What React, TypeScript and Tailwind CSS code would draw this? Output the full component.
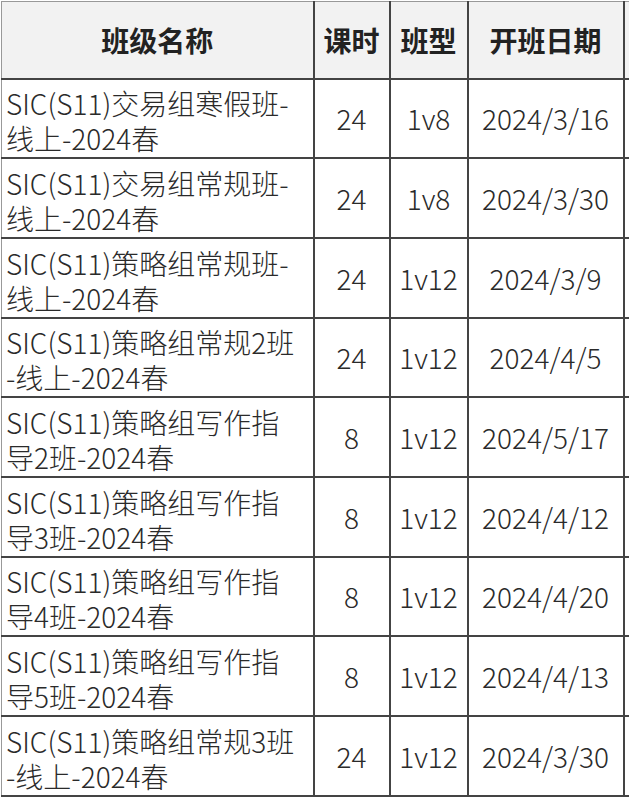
import React from 'react';

interface Course {
    name: string[];
    hours: number;
    type: string;
    date: string;
}

const courses: Course[] = [
    { name: ['SIC(S11)交易组寒假班-', '线上-2024春'], hours: 24, type: '1v8', date: '2024/3/16' },
    { name: ['SIC(S11)交易组常规班-', '线上-2024春'], hours: 24, type: '1v8', date: '2024/3/30' },
    { name: ['SIC(S11)策略组常规班-', '线上-2024春'], hours: 24, type: '1v12', date: '2024/3/9' },
    { name: ['SIC(S11)策略组常规2班', '-线上-2024春'], hours: 24, type: '1v12', date: '2024/4/5' },
    { name: ['SIC(S11)策略组写作指', '导2班-2024春'], hours: 8, type: '1v12', date: '2024/5/17' },
    { name: ['SIC(S11)策略组写作指', '导3班-2024春'], hours: 8, type: '1v12', date: '2024/4/12' },
    { name: ['SIC(S11)策略组写作指', '导4班-2024春'], hours: 8, type: '1v12', date: '2024/4/20' },
    { name: ['SIC(S11)策略组写作指', '导5班-2024春'], hours: 8, type: '1v12', date: '2024/4/13' },
    { name: ['SIC(S11)策略组常规3班', '-线上-2024春'], hours: 24, type: '1v12', date: '2024/3/30' },
];

export default function App() {
    return (
        <div
            className="w-[629px] h-[797px] overflow-hidden bg-white text-[#2a2a2a]"
            style={{ fontFamily: '"Noto Sans CJK SC", "Noto Sans", sans-serif' }}
        >
            <table className="table-fixed border-collapse w-[720px] ml-px mt-px text-[28px] font-light">
                <colgroup>
                    <col className="w-[312px]" />
                    <col className="w-[76px]" />
                    <col className="w-[78px]" />
                    <col className="w-[156px]" />
                    <col />
                </colgroup>
                <thead>
                    <tr className="h-[77px] bg-[#f2f2f2] font-bold text-[#222]">
                        <th className="border-2 border-[#444] border-l-[#999] border-t-[#999] border-l border-t">班级名称</th>
                        <th className="border-2 border-[#444] border-t border-t-[#999]">课时</th>
                        <th className="border-2 border-[#444] border-t border-t-[#999]">班型</th>
                        <th className="border-2 border-[#444] border-t border-t-[#999]">开班日期</th>
                        <th className="border-2 border-[#444] border-t border-t-[#999]"></th>
                    </tr>
                </thead>
                <tbody>
                    {courses.map((c, i) => (
                        <tr key={i} className="h-[79.7px]">
                            <td className="border-2 border-[#444] border-l border-l-[#999] pl-1 pr-0 pt-[6px] pb-0 leading-[35px] whitespace-nowrap">
                                {c.name[0]}
                                <br />
                                {c.name[1]}
                            </td>
                            <td className="border-2 border-[#444] text-center">{c.hours}</td>
                            <td className="border-2 border-[#444] text-center">{c.type}</td>
                            <td className="border-2 border-[#444] text-center">{c.date}</td>
                            <td className="border-2 border-[#444]"></td>
                        </tr>
                    ))}
                </tbody>
            </table>
        </div>
    );
}
